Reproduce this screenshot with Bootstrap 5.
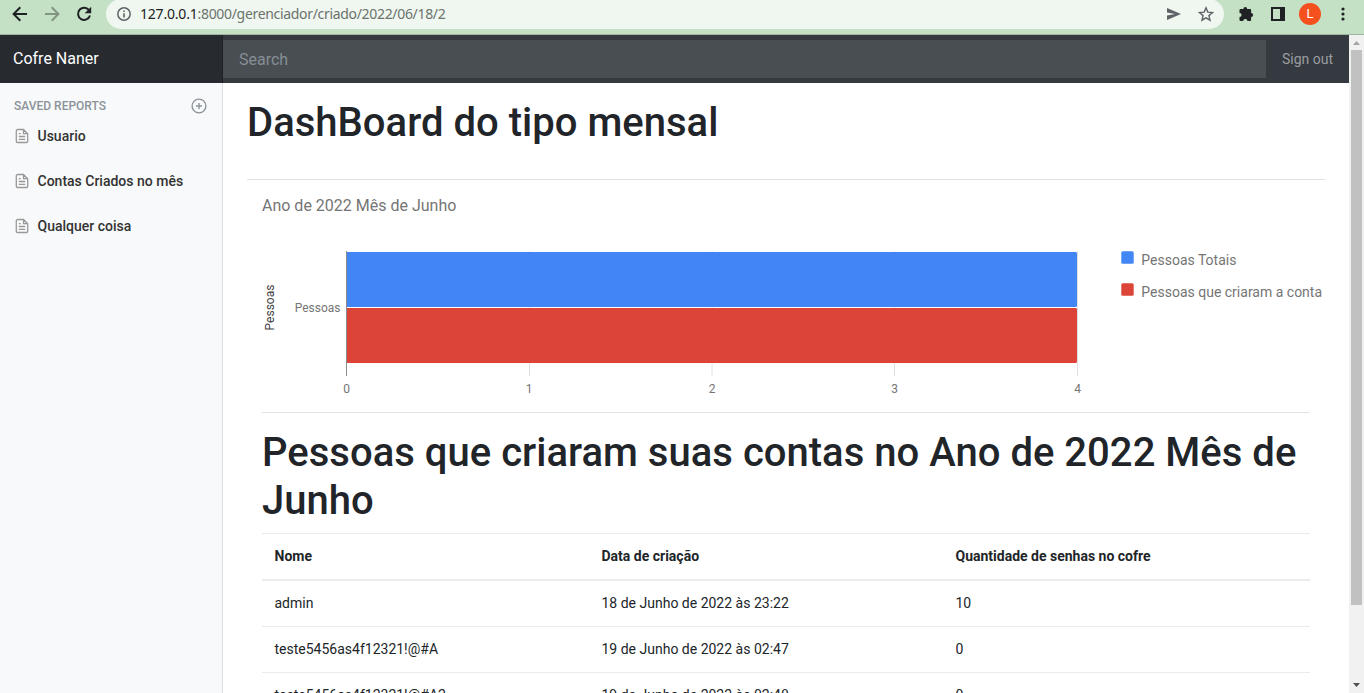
<!DOCTYPE html>
<html lang="pt-br">
<head>
<meta charset="utf-8">
<title>Cofre Naner</title>
<link href="https://cdn.jsdelivr.net/npm/bootstrap@5.3.0/dist/css/bootstrap.min.css" rel="stylesheet">
<style>
html,body{height:693px;overflow:hidden}
body{font-family:Roboto,sans-serif;color:#212529;background:#fff}
svg{display:block;flex:none}
.browser-bar{height:35px;background:#c5e1c5;border-bottom:1px solid #9fb49f;padding:0 12px 6px 12px}
.omnibox{height:30px;margin-left:14px;width:1118px;background:#f0f7f0;border-radius:15px;font:14px "Noto Sans",sans-serif;color:#6b736d;padding:0 10px 0 11px}
.omnibox b{font-weight:400;color:#202124;letter-spacing:-.2px}
.url-text{letter-spacing:-.32px;padding-bottom:1px;padding-left:1px}
.avatar-dot{width:22px;height:22px;background:#f4511e;color:#fff;font-size:13px}
.viewport{height:658px}
.topbar{height:48px;background:#343a40}
.brand-cell{width:223px;height:48px;background:#272b30;border-right:1px solid #1f2226;color:#fff;padding:0 0 0 13px}
.search-field,.search-field:focus{height:38px;background:#494e52;border:0;border-radius:0;color:#fff;padding:0 16px;width:1043px;box-shadow:none}
.search-field::placeholder{color:#868e96;opacity:1}
.signout{color:#9a9da0;padding-left:16px;font-size:14px}
.side{width:223px;background:#f8f9fa;border-right:1px solid #dcdfe2;padding:12px 15px 0 14px}
.side-title{font-size:12px;font-weight:500;color:#8b9299;height:22px}
.side-link{height:45px;font-size:14px;font-weight:500;color:#333;gap:8.5px;padding-left:1px}
.side-link span{padding-top:1.5px}
.main-col{padding:16px 24px 0;min-width:0}
.page-head{height:81px;border-bottom:1px solid #dee2e6}
h1{font-size:40px;line-height:48px;font-weight:500;margin:0;letter-spacing:.02px}
.inner{padding:0 15px}
.chart-box{height:232px}
.people{font-size:14px;line-height:21px;margin:0;table-layout:fixed;border-top:1px solid #e9ecef;--bs-table-bg:transparent}
.people th,.people td{padding:12px 12px 12px 12.5px;border-color:#e9ecef;border-bottom-width:1px}
.people th{border-bottom-width:2px}
.scroll-col{width:15px;background:#f1f1f1;padding:0 2px}
.scroll-thumb{height:555px;background:#c1c1c1;width:11px}
</style>
</head>
<body>
<div class="browser-bar d-flex align-items-center">
 <svg width="16" height="16" viewBox="0 0 16 16" fill="none" stroke="#202124" stroke-width="2"><path d="M15 8H2M8.300 1.300 1.600 8l6.700 6.700"/></svg>
 <svg class="ms-3" width="16" height="16" viewBox="0 0 16 16" fill="none" stroke="#829583" stroke-width="2"><path d="M1 8h13M7.700 1.300 14.400 8l-6.700 6.700"/></svg>
 <svg class="ms-3" width="16" height="16" viewBox="0 0 16 16"><path d="M13.300 4.500A6.100 6.100 0 1 0 14 9.500" fill="none" stroke="#202124" stroke-width="2"/><path d="M15.200 .7v6.500H8.700z" fill="#202124"/></svg>
 <div class="omnibox d-flex align-items-center">
  <svg class="me-2" width="14" height="14" viewBox="0 0 14 14"><circle cx="7" cy="7" r="6.200" fill="none" stroke="#5f6368" stroke-width="1.500"/><path d="M6.200 6.200h1.600v4.200H6.200zM6.200 3.400h1.600V5H6.200z" fill="#5f6368"/></svg>
  <span class="url-text"><b>127.0.0.1</b>:8000/gerenciador/criado/2022/06/18/2</span>
  <svg class="ms-auto" width="16" height="14" viewBox="0 0 16 14"><path d="M1 1v4.500L9 7 1 8.500V13L15 7z" fill="#5f6368"/></svg>
  <svg class="ms-3" width="16" height="16" viewBox="0 0 16 16"><path d="m8 1.800 1.800 4.300 4.700.4-3.600 3.100 1.100 4.600L8 11.800l-4 2.400 1.100-4.600L1.500 6.500l4.700-.4z" fill="none" stroke="#5f6368" stroke-width="1.400"/></svg>
 </div>
 <svg style="margin-left:14px" width="16" height="16" viewBox="0 0 16 16"><path d="M2.500 3h2.900a1.900 1.900 0 0 1 3.800 0h2.900q1 0 1 1v2.900a2 2 0 0 1 0 4V14q0 1-1 1H9.400a2.100 2.100 0 0 0-4.200 0H2.500q-1 0-1-1v-2.900a2.100 2.100 0 0 0 0-4.200V4q0-1 1-1z" fill="#202124"/></svg>
 <svg style="margin-left:17px" width="14" height="14" viewBox="0 0 14 14"><path d="M1 1h12v12H1z" fill="none" stroke="#202124" stroke-width="2"/><path d="M9 1h4v12H9z" fill="#202124"/></svg>
 <div class="avatar-dot rounded-circle d-flex align-items-center justify-content-center" style="margin-left:14px">L</div>
 <svg style="margin-left:19.500px" width="4" height="14" viewBox="0 0 4 14" fill="#202124"><circle cx="2" cy="2" r="1.600"/><circle cx="2" cy="7" r="1.600"/><circle cx="2" cy="12" r="1.600"/></svg>
</div>
<div class="viewport d-flex">
 <div class="d-flex flex-column flex-grow-1 overflow-hidden">
  <nav class="topbar d-flex align-items-center flex-shrink-0">
   <div class="brand-cell d-flex align-items-center flex-shrink-0">Cofre Naner</div>
   <input class="search-field form-control flex-shrink-0" type="text" placeholder="Search">
   <span class="signout text-nowrap">Sign out</span>
  </nav>
  <div class="d-flex flex-grow-1 overflow-hidden">
   <aside class="side flex-shrink-0">
    <div class="side-title d-flex align-items-center justify-content-between">SAVED REPORTS
     <svg width="16" height="16" viewBox="0 0 16 16" fill="none" stroke="#8b9299" stroke-width="1.400"><circle cx="8" cy="8" r="6.900"/><path d="M8 5v6M5 8h6"/></svg>
    </div>
    <nav class="d-flex flex-column" style="margin-top:-4px">
     <div class="side-link d-flex align-items-center"><svg width="14" height="16" viewBox="0 0 14 16" fill="none" stroke="#999" stroke-width="1.300"><path d="M8.500 1.500H2.600c-.7 0-1.300.6-1.300 1.300v10.400c0 .7.600 1.300 1.300 1.300h8.800c.7 0 1.300-.6 1.300-1.300V5.700zv4.200h4.200M3.800 5.700h1.900M3.800 8.500h6.400M3.800 11.300h6.400"/></svg><span>Usuario</span></div>
     <div class="side-link d-flex align-items-center"><svg width="14" height="16" viewBox="0 0 14 16" fill="none" stroke="#999" stroke-width="1.300"><path d="M8.500 1.500H2.600c-.7 0-1.300.6-1.300 1.300v10.400c0 .7.600 1.300 1.300 1.300h8.800c.7 0 1.300-.6 1.300-1.300V5.700zv4.200h4.200M3.800 5.700h1.900M3.800 8.500h6.400M3.800 11.300h6.400"/></svg><span>Contas Criados no mês</span></div>
     <div class="side-link d-flex align-items-center"><svg width="14" height="16" viewBox="0 0 14 16" fill="none" stroke="#999" stroke-width="1.300"><path d="M8.500 1.500H2.600c-.7 0-1.300.6-1.300 1.300v10.400c0 .7.600 1.300 1.300 1.300h8.800c.7 0 1.300-.6 1.300-1.300V5.700zv4.200h4.200M3.800 5.700h1.900M3.800 8.500h6.400M3.800 11.300h6.400"/></svg><span>Qualquer coisa</span></div>
    </nav>
   </aside>
   <main class="main-col flex-grow-1">
    <div class="page-head"><h1>DashBoard do tipo mensal</h1></div>
    <div class="inner">
     <div class="chart-box">
      <svg width="1066" height="232" viewBox="0 0 1066 232" font-family="Roboto,sans-serif" fill="#757575">
       <text x="0" y="31" font-size="16">Ano de 2022 Mês de Junho</text>
       <path d="M267.500 71v125M450 71v125M632.500 71v125M815.500 71v125" stroke="#e0e0e0" fill="none"/>
       <path d="M85 72h728.500a1.500 1.500 0 0 1 1.500 1.500v52a1.500 1.500 0 0 1-1.500 1.500H85z" fill="#4285f4"/>
       <path d="M85 128h728.500a1.500 1.500 0 0 1 1.500 1.500v52a1.500 1.500 0 0 1-1.500 1.500H85z" fill="#db4437"/>
       <path d="M84.500 71v125" stroke="#8c8c8c"/>
       <text transform="translate(12 127.500) rotate(-90)" font-size="12" text-anchor="middle" fill="#424242">Pessoas</text>
       <g font-size="12"><text x="78.500" y="132" text-anchor="end">Pessoas</text>
       <g text-anchor="middle"><text x="84.500" y="213">0</text><text x="267.200" y="213">1</text><text x="450" y="213">2</text><text x="632.700" y="213">3</text><text x="815.500" y="213">4</text></g></g>
       <rect x="859.300" y="71.300" width="12.400" height="12.400" rx="1.500" fill="#4285f4"/>
       <rect x="859.300" y="103.300" width="12.400" height="12.400" rx="1.500" fill="#db4437"/>
       <g font-size="14"><text x="879.300" y="85">Pessoas Totais</text><text x="879.300" y="117">Pessoas que criaram a conta</text></g>
      </svg>
     </div>
     <div style="border-top:1px solid #e3e3e3;margin-bottom:16px"></div>
     <h1>Pessoas que criaram suas contas no Ano de 2022 Mês de Junho</h1>
     <table class="table people" style="margin-top:8px">
      <colgroup><col style="width:327px"><col style="width:354px"><col></colgroup>
      <thead><tr><th>Nome</th><th>Data de criação</th><th>Quantidade de senhas no cofre</th></tr></thead>
      <tbody>
       <tr><td>admin</td><td>18 de Junho de 2022 às 23:22</td><td>10</td></tr>
       <tr><td>teste5456as4f12321!@#A</td><td>19 de Junho de 2022 às 02:47</td><td>0</td></tr>
       <tr><td>teste5456as4f12321!@#A2</td><td>19 de Junho de 2022 às 02:48</td><td>0</td></tr>
      </tbody>
     </table>
    </div>
   </main>
  </div>
 </div>
 <div class="scroll-col d-flex flex-column align-items-center flex-shrink-0">
  <svg width="11" height="15" viewBox="0 0 11 15"><path d="M2 10h7L5.500 6z" fill="#a3a3a3"/></svg>
  <div class="scroll-thumb"></div>
  <svg class="mt-auto" width="11" height="15" viewBox="0 0 11 15"><path d="M2 5h7L5.500 9z" fill="#505050"/></svg>
 </div>
</div>
<script src="https://cdn.jsdelivr.net/npm/bootstrap@5.3.0/dist/js/bootstrap.bundle.min.js"></script>
</body>
</html>
